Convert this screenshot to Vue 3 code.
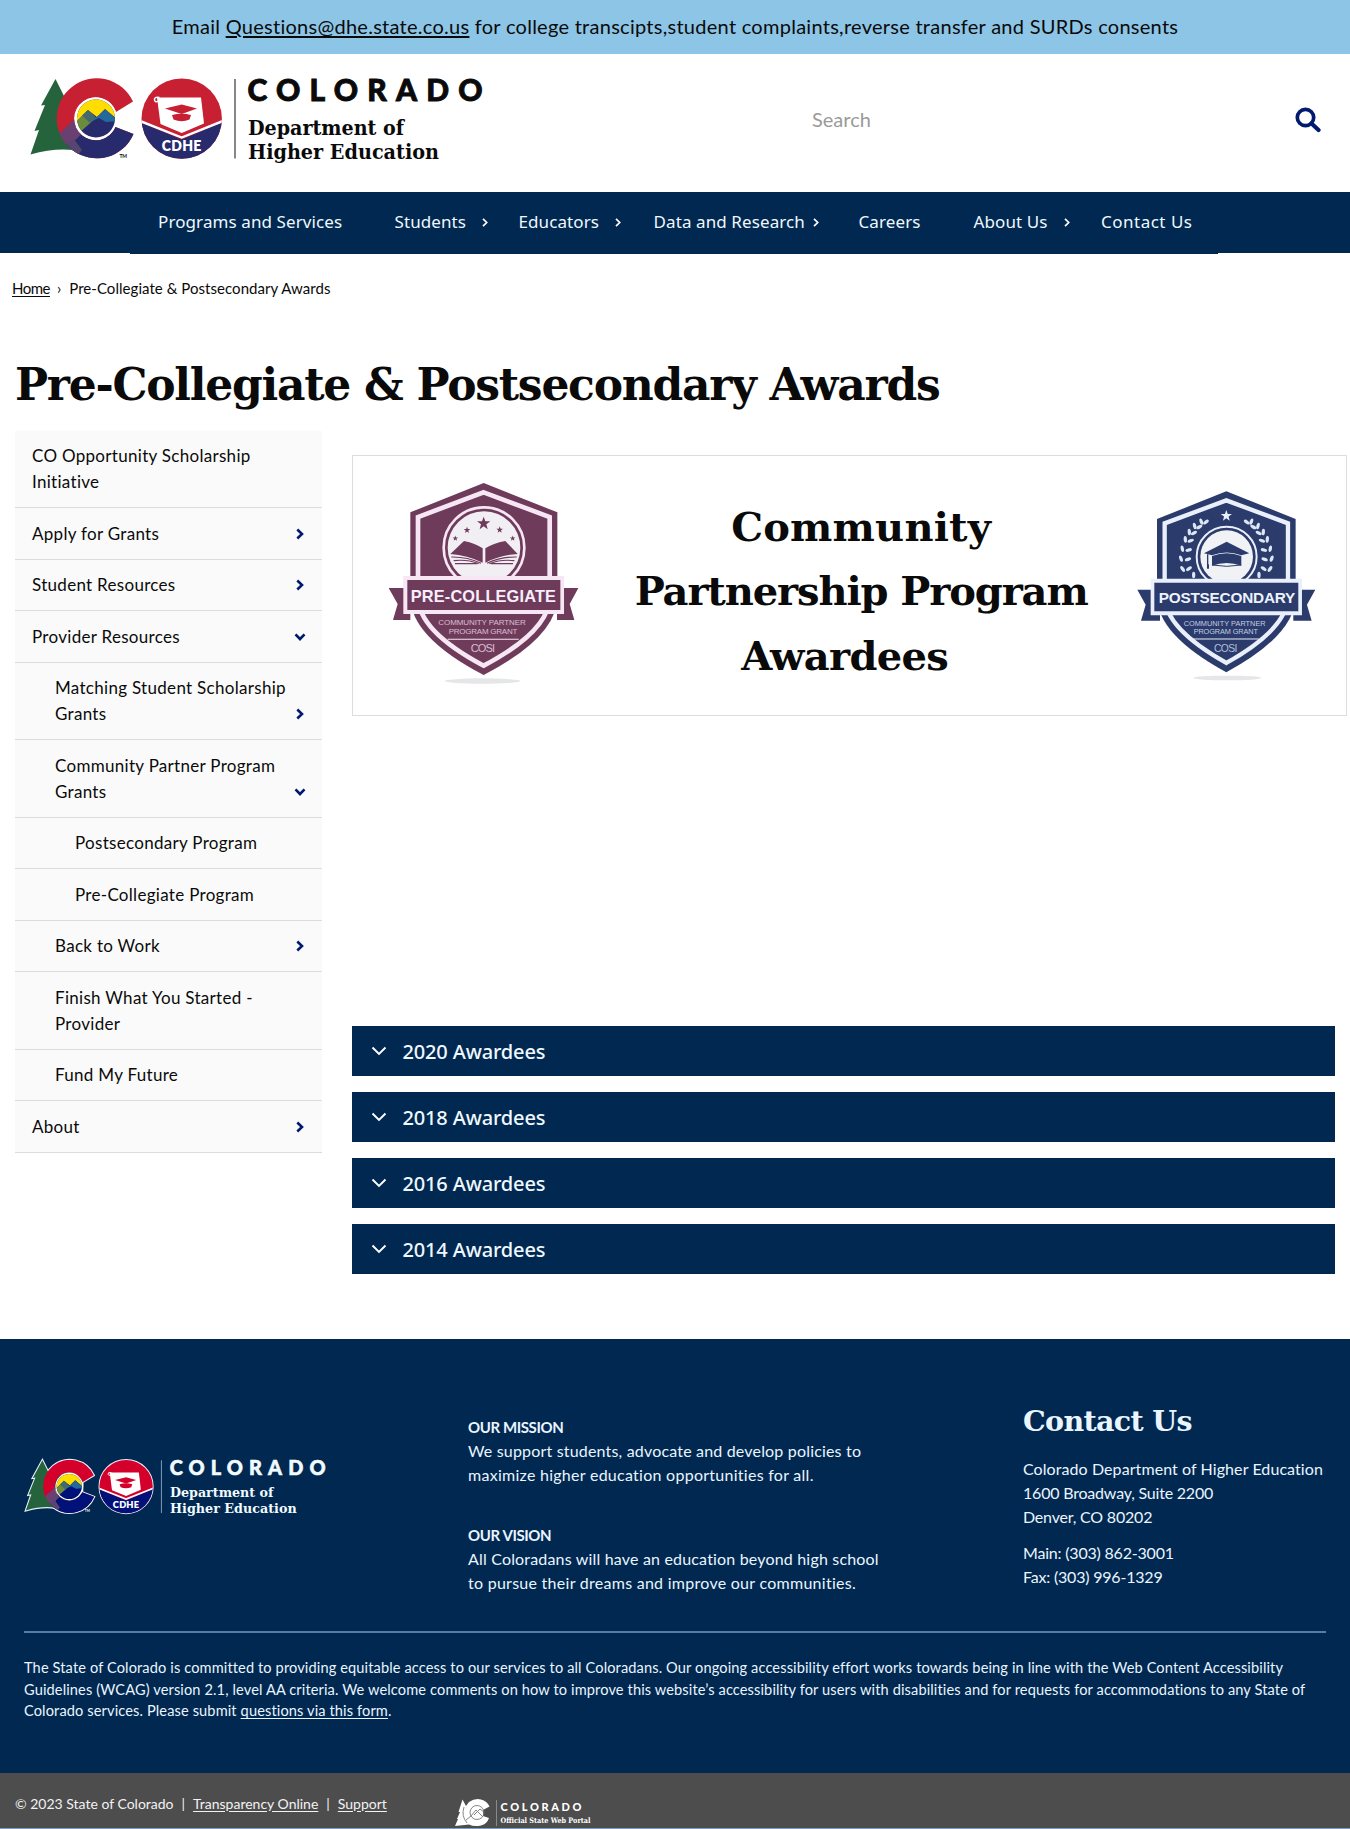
<script setup>
const nav = [
  { label: 'Programs and Services' },
  { label: 'Students', arrow: 'wide' },
  { label: 'Educators', arrow: 'mid' },
  { label: 'Data and Research', arrow: 'tight' },
  { label: 'Careers' },
  { label: 'About Us', arrow: 'wide' },
  { label: 'Contact Us' },
]

const menu = [
  { label: 'CO Opportunity Scholarship Initiative', level: 1 },
  { label: 'Apply for Grants', level: 1, arrow: 'right' },
  { label: 'Student Resources', level: 1, arrow: 'right' },
  { label: 'Provider Resources', level: 1, arrow: 'down' },
  { label: 'Matching Student Scholarship Grants', level: 2, arrow: 'right' },
  { label: 'Community Partner Program Grants', level: 2, arrow: 'down' },
  { label: 'Postsecondary Program', level: 3 },
  { label: 'Pre-Collegiate Program', level: 3 },
  { label: 'Back to Work', level: 2, arrow: 'right' },
  { label: 'Finish What You Started - Provider', level: 2 },
  { label: 'Fund My Future', level: 2 },
  { label: 'About', level: 1, arrow: 'right' },
]

const years = [2020, 2018, 2016, 2014]

const star = 'M0-20 5-6 20-6 8 3 12 18 0 9-12 18-8 3-20-6-5-6Z'

// leaf positions along the right-hand laurel branch: x, y, rotation
const leaves = [
  [1190, 247, -50], [1204, 246, 20], [1210, 262, -60], [1224, 259, 15],
  [1226, 280, -65], [1240, 277, 5], [1236, 303, -70], [1252, 299, 5],
  [1242, 331, -75], [1261, 327, 10], [1244, 359, -70], [1265, 357, 20],
  [1241, 387, -55], [1260, 388, 35], [1227, 406, 0],
]
</script>

<template>
  <div class="page">
    <!-- Shared Colorado / CDHE logo -->
    <svg class="defs" width="0" height="0" aria-hidden="true">
      <defs>
        <clipPath id="ring"><circle cx="96" cy="118.5" r="19" /></clipPath>
        <clipPath id="seal"><circle cx="181.7" cy="118.6" r="40.2" /></clipPath>
        <clipPath id="cee">
          <path d="M116 112 133 101.5A40 40 0 1 0 133.500 134L115.500 127A21.500 21.500 0 1 1 116 112Z" />
        </clipPath>
        <symbol id="cdhe" viewBox="28 74 458 92">
          <g class="outline">
            <path d="M55.500 79 66 100 63 99.500 72 120 84 152Q60 146 30.500 154.500L39 130 34.500 131 45 105 41 105.500Z" />
            <path d="M116 112 133 101.500A40 40 0 1 0 133.500 134L115.500 127Z" />
            <circle cx="181.700" cy="118.600" r="40" />
          </g>
          <path fill="#25633c" d="M55.500 79 66 100 63 99.500 72 120 84 152Q60 146 30.500 154.500L39 130 34.500 131 45 105 41 105.500Z" />
          <g clip-path="url(#cee)">
            <path class="red" d="M50 74H140V165H50Z" />
            <path class="blue" d="M66 144 96 118 140 118V165H50Z" />
            <path fill="#694072" d="M56 137 76 118 88 128 68 147 62 146Z" />
            <path fill="#55456f" d="M66 145 74 139 82 150 76 157Z" />
          </g>
          <circle cx="96" cy="118.500" r="21" fill="#fff" />
          <g clip-path="url(#ring)">
            <path class="blue" d="M75 98H118V140H75Z" />
            <path fill="#fd0" d="M75 98H118V120L105 109 97 117 88 110 75 123Z" />
            <path fill="#6c8b3e" d="M75 123 88 110 96 118 79 133 75 130Z" />
            <path fill="#416b6e" d="M82 115.500 88 110 96 118 90 123Z" />
            <path fill="#24699c" d="M95 118.500 105.500 109.500 118 121 106 122 99 118 92 121Z" />
          </g>
          <g clip-path="url(#seal)">
            <path class="red" d="M140 78H223V160H140Z" />
            <path class="blue" d="M140 122 181.700 139.500 223 122V160H140Z" />
            <path d="M140 121 181.700 137.500 223 121" fill="none" stroke="#fff" stroke-width="2.400" />
          </g>
          <path fill="#fff" d="M157 97.500H201L204 123.500 181.700 133 160.500 124Z" />
          <path d="M159.500 97.500Q154 96.500 154.500 100 155.500 103 158 101" fill="none" stroke="#fff" stroke-width="1.500" />
          <path class="red" d="M165 108.500 181.700 104.500 197 108.500 181.700 114Z" />
          <path class="red" d="M172 115Q181.700 112.500 191 115L189.500 119.500Q181.700 123 173.500 119.500Z" />
          <text class="seal-text" x="161.800" y="150.500" textLength="39.500">CDHE</text>
          <text class="tm" x="119.500" y="157.500" textLength="7.500">TM</text>
          <path class="rule" d="M235 79V158.500" />
          <text class="state" x="247.500" y="101.200" textLength="235">COLORADO</text>
          <text class="dept" x="248" y="135" textLength="156" lengthAdjust="spacingAndGlyphs">Department of</text>
          <text class="dept" x="248" y="158.500" textLength="191" lengthAdjust="spacingAndGlyphs">Higher Education</text>
        </symbol>
      </defs>
    </svg>

    <div class="banner">
      <p>Email <a>Questions@dhe.state.co.us</a> for college transcipts,student complaints,reverse transfer and SURDs consents</p>
    </div>

    <header class="header">
      <svg class="logo" width="458" height="92" viewBox="0 0 458 92"><use href="#cdhe" width="458" height="92" /></svg>
      <div class="search">
        <span>Search</span>
        <svg width="26" height="26" viewBox="0 0 26 26">
          <circle cx="10.500" cy="10.500" r="8.200" fill="none" stroke="#001a70" stroke-width="3.700" />
          <path d="M16.500 16.500 23.500 23" stroke="#001a70" stroke-width="4.200" stroke-linecap="round" />
        </svg>
      </div>
    </header>

    <nav class="nav">
      <div class="nav-inner">
        <div v-for="n in nav" :key="n.label" class="nav-item">
          <span>{{ n.label }}</span>
          <svg v-if="n.arrow" :class="['nav-arrow', n.arrow]" width="6" height="9" viewBox="0 0 6 9">
            <path d="M1 .8 4.700 4.500 1 8.200" fill="none" stroke="#fff" stroke-width="1.700" />
          </svg>
        </div>
      </div>
    </nav>

    <div class="crumbs"><a>Home</a><span class="sep">›</span><span>Pre-Collegiate &amp; Postsecondary Awards</span></div>

    <h1>Pre-Collegiate &amp; Postsecondary Awards</h1>

    <div class="columns">
      <ul class="side">
        <li v-for="m in menu" :key="m.label" :class="'level-' + m.level">
          <span>{{ m.label }}</span>
          <svg v-if="m.arrow" :class="['side-arrow', m.arrow]" width="12" height="12" viewBox="0 0 12 12">
            <path d="M3.300 1.500 8 6 3.300 10.500" fill="none" stroke="#001a70" stroke-width="2.600" />
          </svg>
        </li>
      </ul>

      <main class="main">
        <section class="card">
          <svg class="badge badge-pre" width="196.700" height="206.700" viewBox="110 120 590 620">
            <ellipse cx="397" cy="723" rx="114" ry="8" fill="#e4e6e8" />
            <path fill="#6f3b5b" d="M400 129 621 217V470Q621 590 400 705 180 590 180 470V217Z" />
            <path d="M400 157 598 231V470Q598 572 400 677 203 572 203 470V231Z" fill="none" stroke="#f7e6f4" stroke-width="14" />
            <circle cx="401" cy="323" r="121" fill="none" stroke="#f7e6f4" stroke-width="8" />
            <circle cx="401" cy="323" r="109" fill="#f1eff3" />
            <g fill="#6f3b5b">
              <path :d="star" transform="translate(400 250)" />
              <path :d="star" transform="translate(350 270) scale(.5)" />
              <path :d="star" transform="translate(448 269) scale(.5)" />
              <path :d="star" transform="translate(315 295) scale(.42)" />
              <path :d="star" transform="translate(487 295) scale(.42)" />
              <path d="M397 325V368Q350 345 300 342L341 303Q375 310 397 325Z" />
              <path d="M405 325V368Q450 345 502 342L465 303Q428 310 405 325Z" />
            </g>
            <path d="M303 351Q350 350 392 370M310 362Q350 357 385 371M314 371H380M499 351Q452 350 410 370M492 362Q452 357 417 371M488 371H422" fill="none" stroke="#6f3b5b" stroke-width="3.500" />
            <path d="M115 444H180V540H128L142 492ZM684 444H620V540H672L658 492Z" fill="#6f3b5b" />
            <path d="M159 408H641V522H159Z" fill="#f7e6f4" />
            <path d="M171 420H630V510H171Z" fill="#6f3b5b" />
            <text class="ribbon" x="181" y="486" textLength="436">PRE-COLLEGIATE</text>
            <text class="small" x="264" y="555" textLength="262">COMMUNITY PARTNER</text>
            <text class="small" x="295" y="582" textLength="206">PROGRAM GRANT</text>
            <path d="M292 598H505" stroke="#f7e6f4" stroke-width="3" />
            <text class="cosi" x="361" y="636" textLength="73">COSI</text>
          </svg>

          <h2>
            <span class="l1">Community</span>
            <span class="l2">Partnership Program</span>
            <span class="l3">Awardees</span>
          </h2>

          <svg class="badge badge-post" width="183.300" height="195" viewBox="855 145 550 585">
            <ellipse cx="1132" cy="715" rx="102" ry="7" fill="#e6e6ea" />
            <path d="M1129 155 1337 238V470Q1337 585 1129 698 921 585 921 470V238Z" fill="#2b3b6b" />
            <path d="M1129 182 1314 251V470Q1314 566 1129 670 944 566 944 470V251Z" fill="none" stroke="#e9effb" stroke-width="13" />
            <circle cx="1130" cy="351" r="90" fill="none" stroke="#e9effb" stroke-width="6" />
            <circle cx="1130" cy="351" r="79" fill="#f1f2f6" />
            <path :d="star" fill="#e9effb" transform="translate(1129 228) scale(.85)" />
            <g fill="#dce6f5">
              <ellipse v-for="l in leaves" :key="'r' + l[0]" rx="5.500" ry="11" :transform="`translate(${l[0]} ${l[1]}) rotate(${l[2]}) scale(.9)`" />
              <ellipse v-for="l in leaves" :key="'l' + l[0]" rx="5.500" ry="11" :transform="`translate(${2258 - l[0]} ${l[1]}) rotate(${-l[2]}) scale(.9)`" />
            </g>
            <g fill="#2b3b6b">
              <path d="M1062 341 1130 306 1198 341 1174 347Q1130 330 1086 347Z" />
              <path d="M1086 349Q1130 332 1174 349V378Q1130 362 1086 378Z" />
              <path d="M1071 344H1075V374H1077V387H1071Z" />
            </g>
            <path d="M1086 376Q1130 384 1174 376" fill="none" stroke="#2b3b6b" stroke-width="3" />
            <path d="M862 450H930V543H873L887 495ZM1396 450H1330V543H1385L1371 495Z" fill="#2b3b6b" />
            <path d="M902 417H1356V527H902Z" fill="#e9effb" />
            <path d="M913 429H1345V515H913Z" fill="#2b3b6b" />
            <text class="ribbon" x="926" y="490" textLength="410">POSTSECONDARY</text>
            <text class="small" x="1001" y="558" textLength="246">COMMUNITY PARTNER</text>
            <text class="small" x="1031" y="584" textLength="193">PROGRAM GRANT</text>
            <path d="M1028 598H1227" stroke="#e9effb" stroke-width="3" />
            <text class="cosi" x="1092" y="636" textLength="70">COSI</text>
          </svg>
        </section>

        <div class="accordion">
          <div v-for="y in years" :key="y" class="acc-item">
            <svg width="16" height="10" viewBox="0 0 16 10"><path d="M1.500 1.500 8 8 14.500 1.500" fill="none" stroke="#fff" stroke-width="1.900" /></svg>
            <span>{{ y }} Awardees</span>
          </div>
        </div>
      </main>
    </div>

    <footer class="footer">
      <div class="foot-top">
        <svg class="logo-light" width="304" height="61" viewBox="0 0 458 92"><use href="#cdhe" width="458" height="92" /></svg>
        <div class="mission">
          <b>OUR MISSION</b>
          <p>We support students, advocate and develop policies to<br /><span class="loose">maximize higher education opportunities for all.</span></p>
          <b class="vision">OUR VISION</b>
          <p>All Coloradans will have an education beyond high school<br /><span class="loose">to pursue their dreams and improve our communities.</span></p>
        </div>
        <div class="contact">
          <h3>Contact Us</h3>
          <p>Colorado Department of Higher Education</p>
          <p class="num">1600 Broadway, Suite 2200<br />Denver, CO 80202</p>
          <p class="num phone">Main: (303) 862-3001<br />Fax: (303) 996-1329</p>
        </div>
      </div>
      <p class="access">
        The State of Colorado is committed to providing equitable access to our services to all Coloradans. Our ongoing accessibility effort works towards being in line with the Web Content Accessibility<br />
        Guidelines (WCAG) version 2.1, level AA criteria. We welcome comments on how to improve this website’s accessibility for users with disabilities and for requests for accommodations to any State of<br />
        Colorado services. Please submit <a>questions via this form</a>.
      </p>
    </footer>

    <div class="bottom">
      <div class="legal"><span>© 2023 State of Colorado</span><i>|</i><a>Transparency Online</a><i>|</i><a>Support</a></div>
      <svg class="portal" width="140" height="28" viewBox="0 0 140 28">
        <path fill="#fff" d="M8.500 .5 12 7 15 3Q21-1 27 .5 33 2 35.500 7.500L29 11V17L35 19Q33 25 27 26.500 20 28 15 25.500L1 27 4 20 3 20 6 13 4.500 13Z" />
        <g fill="none" stroke="#777" stroke-width=".9">
          <circle cx="23" cy="13.500" r="7" />
          <path d="M17 17 22 11 29 18M20 16 26 10 30 13M12 21 17 17M10 8Q7 17 13 24" />
        </g>
        <path d="M42.500 1V27" stroke="#999" stroke-width=".8" />
        <text class="p-state" x="46.500" y="11.500" textLength="81">COLORADO</text>
        <text class="p-sub" x="46.500" y="23.500" textLength="90" lengthAdjust="spacingAndGlyphs">Official State Web Portal</text>
      </svg>
    </div>
  </div>
</template>

<style>
body { margin: 0; background: #fff; }
</style>

<style scoped>
.page {
  width: 1350px;
  height: 1829px;
  overflow: hidden;
  color: #0a0a0a;
  font-family: Lato, "Liberation Sans", sans-serif;
  box-sizing: border-box;
  border-bottom: 1px solid #7f9cc8;
}
p, h1, h2, h3, ul { margin: 0; padding: 0; }
a { text-decoration: underline; text-underline-offset: 2px; }
.defs { display: block; position: absolute; }

.banner {
  height: 54px;
  background: #8dc5e6;
  text-align: center;
  font-size: 20px;
  line-height: 53px;
  letter-spacing: 0.27px;
  white-space: nowrap;
}

.header {
  height: 137.500px;
  display: flex;
  align-items: flex-start;
  box-sizing: border-box;
  padding: 20px 29px 0 28px;
}
.logo, .logo-light { flex: none; display: block; }
.logo {
  --red: #c62032;
  --blue: #272a6c;
  --ink: #0a0a0a;
  --rule: #555;
  --line: none;
}
.logo-light {
  --red: #d4002b;
  --blue: #00117a;
  --ink: #f2fbff;
  --rule: #8aa5c8;
  --line: #e6f0fa;
}
.red { fill: var(--red); }
.blue { fill: var(--blue); }
.outline { fill: none; stroke: var(--line); stroke-width: 3.2; }
.rule { stroke: var(--rule); stroke-width: 1.4; fill: none; }
.state { fill: var(--ink); stroke: var(--ink); stroke-width: 0.9; font: 900 30px Lato, sans-serif; }
.dept { fill: var(--ink); font: bold 20.5px "DejaVu Serif", serif; }
.seal-text { fill: #fff; font: 800 14px Lato, sans-serif; }
.tm { fill: var(--ink); font: bold 5px Lato, sans-serif; }

.search {
  flex: 1;
  margin: 33px 0 0 326px;
  display: flex;
  justify-content: space-between;
  color: #9a9a9a;
  font-size: 20px;
  line-height: 25px;
}

.nav { background: #002850; height: 61.500px; }
.nav-inner {
  width: 1088px;
  height: 62.500px;
  box-sizing: border-box;
  margin-left: 130px;
  padding-left: 28px;
  background: #002850;
  display: grid;
  grid-template-columns: 236.500px 124px 135px 205px 115px 127.500px auto;
  color: #f0f8ff;
  font: 17px/60px "Noto Sans", sans-serif;
  letter-spacing: 0.1px;
  white-space: nowrap;
}
.nav-item { display: flex; align-items: center; height: 60px; }
.nav-item:last-child { letter-spacing: 0.5px; }
.nav-arrow.wide { margin: 2px 0 0 16px; }
.nav-arrow.mid { margin: 2px 0 0 16px; }
.nav-arrow.tight { margin: 2px 0 0 8px; }

.crumbs {
  padding: 25px 0 0 12px;
  height: 62px;
  font-size: 15px;
  line-height: 21px;
}
.crumbs a { letter-spacing: -0.5px; }
.crumbs span:last-child { letter-spacing: 0.05px; }
.sep { margin: 0 8px 0 7px; }

h1 {
  height: 89.500px;
  padding-left: 15px;
  box-sizing: border-box;
  font: bold 44px/90px "DejaVu Serif", serif;
  letter-spacing: -1.26px;
  white-space: nowrap;
}

.columns { display: flex; height: 909.500px; }
.side {
  flex: none;
  width: 307px;
  margin: 1.500px 0 0 15px;
  list-style: none;
  font-size: 17px;
  line-height: 25.900px;
  letter-spacing: 0.3px;
}
.side li {
  display: flex;
  align-items: flex-end;
  justify-content: space-between;
  padding: 12.400px 16px 12.230px 17px;
  border-bottom: 1px solid #dcdcdc;
  background: #fafafa;
}
.side li.level-2 { padding-left: 40px; }
.side li.level-3 { padding-left: 60px; }
.side li span { max-width: 236px; }
.side-arrow { flex: none; margin-bottom: 7px; }
.side-arrow.down { transform: rotate(90deg); }

.main { margin: 25px 0 0 30px; }
.card {
  width: 995px;
  height: 261px;
  box-sizing: border-box;
  border: 1px solid #ddd;
  display: flex;
  align-items: flex-start;
}
.badge { flex: none; display: block; }
.badge-pre { margin: 24px 0 0 33.700px; }
.badge-post { margin-top: 32.300px; }
h2 {
  width: 551.600px;
  margin-top: 39px;
  box-sizing: border-box;
  padding-left: 4px;
  text-align: center;
  font: bold 40px/64.700px "DejaVu Serif", serif;
}
h2 span { display: block; }
.l1 { letter-spacing: 0.2px; }
.l2 { letter-spacing: -1.1px; }
.l3 { padding-right: 33px; letter-spacing: -0.7px; }
.ribbon { fill: #f7effb; font: bold 49px "Liberation Sans", sans-serif; }
.small { fill: #d9bfd2; font: 24px "Liberation Sans", sans-serif; }
.cosi { fill: #d9bfd2; font: 33px "Liberation Sans", sans-serif; }
.badge-post .ribbon { font-size: 46px; fill: #edf3fd; }
.badge-post .small { font-size: 22px; fill: #c3cde4; }
.badge-post .cosi { font-size: 31px; fill: #b3bfd9; }

.accordion {
  margin-top: 310.500px;
  width: 983px;
  display: flex;
  flex-direction: column;
  gap: 16px;
}
.acc-item {
  height: 50px;
  display: flex;
  align-items: center;
  gap: 16px;
  padding-left: 18.500px;
  background: #002850;
  color: #f0f8ff;
  font: 500 20px/50px "Noto Sans", sans-serif;
  letter-spacing: -0.15px;
}
.acc-item span { padding-top: 1px; }

.footer {
  height: 433.500px;
  box-sizing: border-box;
  padding: 0 24px;
  background: #002850;
  color: #eaf5ff;
}
.foot-top {
  height: 293.500px;
  box-sizing: border-box;
  border-bottom: 2px solid #587ba8;
  display: flex;
  align-items: flex-start;
  font-size: 16px;
  line-height: 24.100px;
  white-space: nowrap;
}
.logo-light { margin: 118px 0 0; }
.mission { margin: 76px 0 0 140px; width: 555px; letter-spacing: 0.18px; }
.mission b { display: block; font-size: 15px; letter-spacing: -0.4px; }
.mission .vision { margin-top: 36px; }
.loose { letter-spacing: 0.27px; }
.contact h3 {
  margin: 64px 0 18px;
  font: bold 28.500px/36px "DejaVu Serif", serif;
  letter-spacing: -0.65px;
}
.contact p { letter-spacing: 0.08px; }
.contact .num { letter-spacing: -0.2px; }
.contact .phone { margin-top: 12px; }
.access {
  margin-top: 24.500px;
  font-size: 14.600px;
  line-height: 21.600px;
  letter-spacing: 0.12px;
  white-space: nowrap;
}

.bottom {
  height: 56px;
  background: #4d4d4d;
  color: #f2f2f2;
  display: flex;
  font-size: 14px;
}
.legal { padding: 21px 0 0 15px; width: 454px; box-sizing: border-box; line-height: 20px; white-space: nowrap; }
.legal i { font-style: normal; margin: 0 8px; }
.portal { flex: none; margin-top: 26px; display: block; }
.p-state { fill: #fff; font: 900 11px Lato, sans-serif; }
.p-sub { fill: #fff; font: bold 7.500px "DejaVu Serif", serif; }
</style>
